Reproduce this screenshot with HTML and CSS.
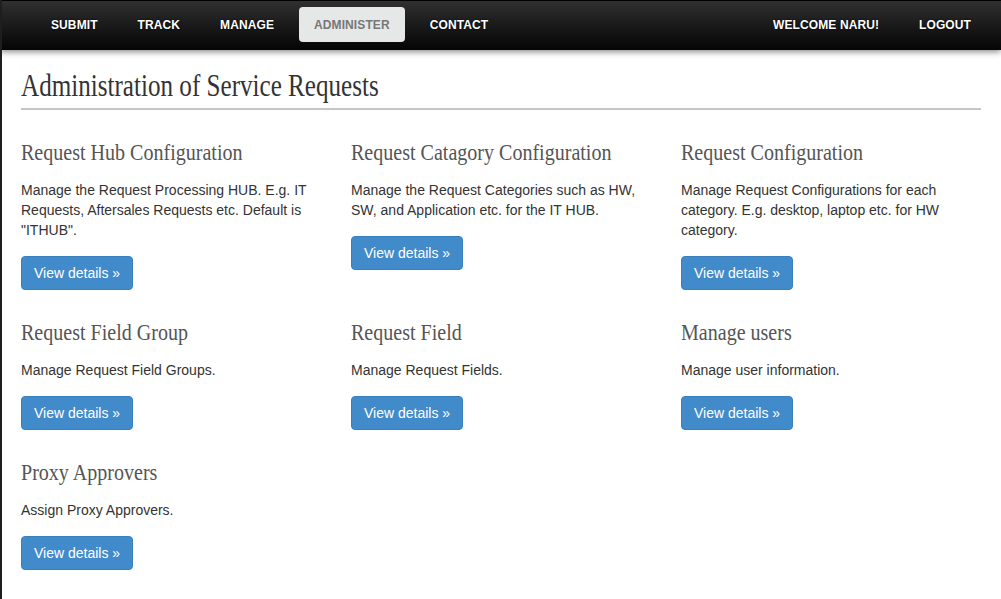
FILE: index.html
```html
<!DOCTYPE html>
<html lang="en">
<head>
<meta charset="utf-8">
<title>Administration of Service Requests</title>
<link rel="stylesheet" href="styles.css">
</head>
<body>
<nav class="navbar">
  <ul class="nav nav-left">
    <li><a href="#">SUBMIT</a></li>
    <li><a href="#">TRACK</a></li>
    <li><a href="#">MANAGE</a></li>
    <li class="active"><a href="#">ADMINISTER</a></li>
    <li><a href="#">CONTACT</a></li>
  </ul>
  <ul class="nav nav-right">
    <li><a href="#">WELCOME NARU!</a></li>
    <li><a href="#">LOGOUT</a></li>
  </ul>
</nav>
<main class="container">
  <h1 class="page-title"><span class="cond cond-title">Administration of Service Requests</span></h1>
  <div class="grid">
    <section class="card">
      <h2><span class="cond cond-h2">Request Hub Configuration</span></h2>
      <p>Manage the Request Processing HUB. E.g. IT Requests, Aftersales Requests etc. Default is "ITHUB".</p>
      <a class="btn" href="#">View details &raquo;</a>
    </section>
    <section class="card">
      <h2><span class="cond cond-h2">Request Catagory Configuration</span></h2>
      <p>Manage the Request Categories such as HW, SW, and Application etc. for the IT HUB.</p>
      <a class="btn" href="#">View details &raquo;</a>
    </section>
    <section class="card">
      <h2><span class="cond cond-h2">Request Configuration</span></h2>
      <p>Manage Request Configurations for each category. E.g. desktop, laptop etc. for HW category.</p>
      <a class="btn" href="#">View details &raquo;</a>
    </section>
    <section class="card">
      <h2><span class="cond cond-h2">Request Field Group</span></h2>
      <p>Manage Request Field Groups.</p>
      <a class="btn" href="#">View details &raquo;</a>
    </section>
    <section class="card">
      <h2><span class="cond cond-h2">Request Field</span></h2>
      <p>Manage Request Fields.</p>
      <a class="btn" href="#">View details &raquo;</a>
    </section>
    <section class="card">
      <h2><span class="cond cond-h2">Manage users</span></h2>
      <p>Manage user information.</p>
      <a class="btn" href="#">View details &raquo;</a>
    </section>
    <section class="card">
      <h2><span class="cond cond-h2">Proxy Approvers</span></h2>
      <p>Assign Proxy Approvers.</p>
      <a class="btn" href="#">View details &raquo;</a>
    </section>
  </div>
</main>
</body>
</html>
```
FILE: styles.css
```css
* { box-sizing: border-box; }

html, body {
  margin: 0;
  padding: 0;
  background: #fff;
}

body {
  min-height: 599px;
  border-left: 2px solid #1e1e1e;
  font-family: "Liberation Sans", Arial, Helvetica, sans-serif;
  font-size: 14px;
  line-height: 20px;
  color: #333;
  overflow: hidden;
}

.navbar {
  position: relative;
  z-index: 2;
  margin-left: -2px;
  height: 50px;
  display: flex;
  justify-content: space-between;
  padding: 7px 10px 0 31px;
  background: linear-gradient(#303030 0%, #1c1c1c 45%, #050505 100%);
  border-top: 1px solid #000;
  box-shadow: 0 2px 6px rgba(0, 0, 0, 0.45);
}

.nav {
  display: flex;
  list-style: none;
  margin: 0;
  padding: 0;
}

.nav li {
  margin: 0 5px;
}

.nav a {
  display: block;
  height: 35px;
  line-height: 37px;
  padding: 0 15px;
  font-size: 12px;
  font-weight: bold;
  letter-spacing: 0.1px;
  color: #fff;
  text-decoration: none;
  text-shadow: 0 0 2px rgba(0, 0, 0, 0.9);
  border-radius: 4px;
  margin-top: -1px;
}

.nav li.active a {
  background: #e6e7e7;
  color: #777;
  text-shadow: none;
}

.container {
  padding: 18px 0 0 19px;
  width: 979px;
}

.page-title {
  margin: 0;
  font-family: "Liberation Serif", "Times New Roman", serif;
  font-weight: normal;
  font-size: 31px;
  line-height: 36px;
  color: #333;
  padding-bottom: 4px;
  border-bottom: 2px solid #c6c6c6;
  white-space: nowrap;
}

.cond {
  display: inline-block;
  transform-origin: left center;
}

.cond-title { transform: scaleX(0.81); }
.cond-h2 { transform: scaleX(0.835); }

.grid {
  display: grid;
  grid-template-columns: repeat(3, 330px);
  padding-top: 28px;
  row-gap: 28px;
}

.card {
  padding-right: 30px;
}

.card h2 {
  margin: 0;
  font-family: "Liberation Serif", "Times New Roman", serif;
  font-weight: normal;
  font-size: 24px;
  line-height: 28px;
  color: #555;
  white-space: nowrap;
}

.card p {
  margin: 14px 0 16px;
  color: #333;
}

.btn {
  display: inline-block;
  height: 34px;
  padding: 6px 12px;
  font-size: 14px;
  line-height: 20px;
  color: #fff;
  text-decoration: none;
  background: #428bca;
  border: 1px solid #3a80bf;
  border-radius: 4px;
}
```
